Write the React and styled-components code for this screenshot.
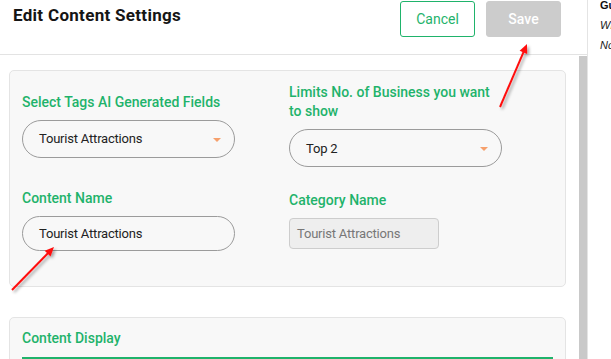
import React from 'react';
import styled, { createGlobalStyle } from 'styled-components';

const GlobalStyle = createGlobalStyle`
  html, body {
    margin: 0;
    padding: 0;
    background: #fff;
    font-family: Roboto, "Liberation Sans", Arial, sans-serif;
  }
  * {
    box-sizing: border-box;
  }
`;

const GREEN = '#1fb36b';

const Select = ({ value }) => (
  <PillBox>
    <span>{value}</span>
    <Caret />
  </PillBox>
);

const Arrow = ({ x1, y1, x2, y2 }) => {
  const angle = Math.atan2(y2 - y1, x2 - x1);
  const len = 10;
  const spread = 0.42;
  const ax = x2 - len * Math.cos(angle - spread);
  const ay = y2 - len * Math.sin(angle - spread);
  const bx = x2 - len * Math.cos(angle + spread);
  const by = y2 - len * Math.sin(angle + spread);
  const ex = x2 - 7 * Math.cos(angle);
  const ey = y2 - 7 * Math.sin(angle);
  return (
    <g filter="url(#arrowShadow)">
      <line x1={x1} y1={y1} x2={ex} y2={ey} stroke="#ff1010" strokeWidth="2" />
      <polygon points={`${x2},${y2} ${ax},${ay} ${bx},${by}`} fill="#ff1010" />
    </g>
  );
};

const App = () => (
  <Page>
    <GlobalStyle />
    <Modal>
      <Header>
        <Title>Edit Content Settings</Title>
        <Actions>
          <Button>Cancel</Button>
          <Button primary disabled>Save</Button>
        </Actions>
      </Header>
      <Body>
        <Content>
          <Card>
            <FieldGrid>
              <Field>
                <Label>Select Tags AI Generated Fields</Label>
                <Select value="Tourist Attractions" />
              </Field>
              <Field>
                <Label>Limits No. of Business you want to show</Label>
                <Select value="Top 2" />
              </Field>
              <Field>
                <Label>Content Name</Label>
                <TextInput>Tourist Attractions</TextInput>
              </Field>
              <Field>
                <Label>Category Name</Label>
                <ReadOnlyInput>Tourist Attractions</ReadOnlyInput>
              </Field>
            </FieldGrid>
          </Card>
          <DisplayCard>
            <Label>Content Display</Label>
            <GreenRule />
          </DisplayCard>
        </Content>
        <Scrollbar />
      </Body>
    </Modal>
    <SidePanel>
      <SideHeading>Guidelines</SideHeading>
      <SideNote>What to show</SideNote>
      <SideNote>Note</SideNote>
    </SidePanel>
    <Annotations width="611" height="359">
      <defs>
        <filter id="arrowShadow" x="-50%" y="-50%" width="200%" height="200%">
          <feDropShadow dx="2" dy="2" stdDeviation="1.4" floodColor="#000" floodOpacity="0.35" />
        </filter>
      </defs>
      <Arrow x1={500} y1={107} x2={527} y2={44} />
      <Arrow x1={12} y1={290} x2={54} y2={247} />
    </Annotations>
  </Page>
);
export default App;

const Page = styled.div`
  position: relative;
  display: flex;
  width: 611px;
  height: 359px;
  overflow: hidden;
  background: #fff;
`;

const Modal = styled.div`
  width: 588px;
  flex-shrink: 0;
  display: flex;
  flex-direction: column;
  border-right: 1px solid #e4e4e4;
`;

const Header = styled.div`
  height: 55px;
  flex-shrink: 0;
  display: flex;
  justify-content: space-between;
  align-items: flex-start;
  padding: 0 26px 0 13px;
  border-bottom: 1px solid #e3e3e3;
`;

const Title = styled.h2`
  margin: 5px 0 0;
  font-size: 17px;
  font-weight: 700;
  letter-spacing: 0.3px;
  color: #151515;
`;

const Actions = styled.div`
  display: flex;
  gap: 11px;
  padding-top: 1px;
`;

const Button = styled.button`
  width: 75px;
  height: 36px;
  border-radius: 3px;
  font-family: inherit;
  font-size: 14px;
  cursor: pointer;
  border: 1px solid ${props => (props.primary ? '#cccccc' : GREEN)};
  background: ${props => (props.primary ? '#cccccc' : '#fff')};
  color: ${props => (props.primary ? '#fff' : GREEN)};
  font-weight: ${props => (props.primary ? 500 : 400)};
`;

const Body = styled.div`
  flex: 1;
  min-height: 0;
  display: flex;
  overflow: hidden;
`;

const Content = styled.div`
  flex: 1;
  display: flex;
  flex-direction: column;
  gap: 30px;
  padding: 15px 13px 0 9px;
`;

const Scrollbar = styled.div`
  width: 8px;
  margin-top: 1px;
  background: #c9c9c9;
`;

const Card = styled.div`
  background: #f8f8f8;
  border: 1px solid #e4e4e4;
  border-radius: 5px;
  padding: 12px 12px 35px;
`;

const DisplayCard = styled(Card)`
  flex-shrink: 0;
  padding: 11px 12px 20px;
  display: flex;
  flex-direction: column;
  gap: 9px;
`;

const FieldGrid = styled.div`
  display: grid;
  grid-template-columns: 267px 1fr;
  row-gap: 22px;
  align-items: center;
`;

const Field = styled.div`
  display: flex;
  flex-direction: column;
  gap: 8px;
`;

const Label = styled.div`
  font-size: 14px;
  font-weight: 500;
  line-height: 19px;
  color: ${GREEN};
  max-width: 212px;
`;

const PillBox = styled.div`
  width: 213px;
  height: 38px;
  border: 1px solid #9b9b9b;
  border-radius: 19px;
  padding: 0 13px 0 16px;
  display: flex;
  align-items: center;
  justify-content: space-between;
  font-size: 13px;
  letter-spacing: -0.2px;
  color: #222;
`;

const Caret = styled.span`
  width: 0;
  height: 0;
  margin-top: 2px;
  border-left: 4px solid transparent;
  border-right: 4px solid transparent;
  border-top: 4px solid #f6a06c;
`;

const TextInput = styled(PillBox)`
  height: 35px;
`;

const ReadOnlyInput = styled.div`
  width: 150px;
  height: 31px;
  background: #eeeeee;
  border: 1px solid #cdcdcd;
  border-radius: 4px;
  padding-left: 7px;
  display: flex;
  align-items: center;
  font-size: 13px;
  letter-spacing: -0.2px;
  color: #777;
`;

const GreenRule = styled.div`
  height: 2px;
  background: ${GREEN};
`;

const SidePanel = styled.div`
  flex: 1;
  padding-left: 12px;
  margin-top: -5px;
  white-space: nowrap;
  overflow: hidden;
  font-family: "Liberation Sans", Arial, sans-serif;
`;

const SideHeading = styled.div`
  font-size: 11px;
  font-weight: 700;
  line-height: 20px;
  color: #111;
`;

const SideNote = styled.div`
  font-size: 11px;
  font-style: italic;
  line-height: 20px;
  color: #222;
`;

const Annotations = styled.svg`
  position: absolute;
  top: 0;
  left: 0;
  pointer-events: none;
`;
